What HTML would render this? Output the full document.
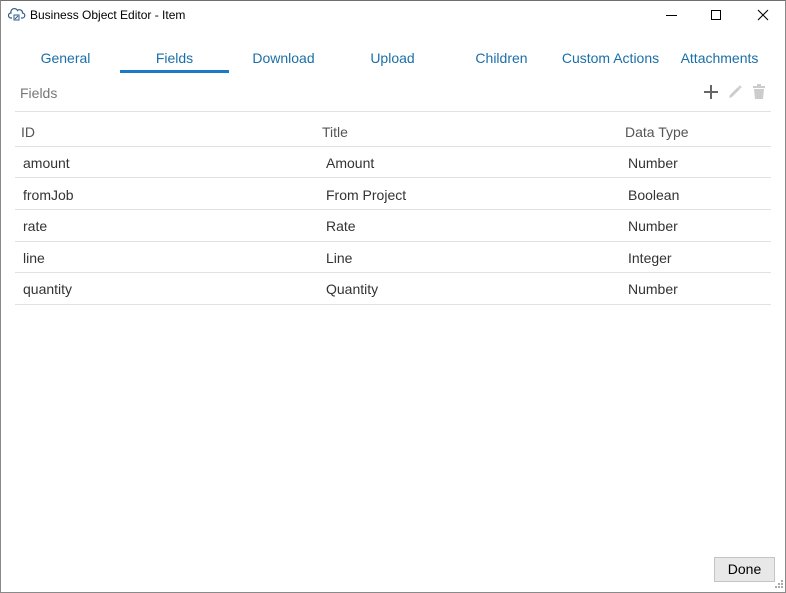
<!DOCTYPE html>
<html><head><style>
*{margin:0;padding:0;box-sizing:border-box}
body{width:786px;height:593px;overflow:hidden;background:#fff;font-family:"Liberation Sans",sans-serif;position:relative}
.win{position:absolute;left:0;top:0;width:786px;height:593px;border:1px solid #8a8a8a;border-top-color:#6f6f6f}
.t{position:absolute;white-space:nowrap}
.tab{position:absolute;top:50px;width:109px;text-align:center;font-size:14px;color:#1b6fa8}
.line{position:absolute;left:15px;width:756px;height:1px;background:#e2e2e2}
.c{position:absolute;font-size:14px;color:#333}
.h{position:absolute;font-size:14px;color:#555}
</style></head><body>
<div class="win"></div>
<svg style="position:absolute;left:8px;top:7px" width="18" height="16" viewBox="0 0 18 16"><path d="M4 11 H3 A2.5 2.5 0 0 1 3 6 A3.5 3.5 0 0 1 9.5 3.5 A3 3 0 0 1 14.5 6 A2.5 2.5 0 0 1 14 11 H13" fill="none" stroke="#2f5f8a" stroke-width="1.2"/><rect x="6" y="8" width="5" height="5" fill="none" stroke="#2f5f8a" stroke-width="1"/><path d="M7 12 L10 9" stroke="#2f5f8a"/></svg>
<div class="t" style="left:30px;top:8px;font-size:12px;color:#000">Business Object Editor - Item</div>
<div style="position:absolute;left:666px;top:15px;width:11px;height:1px;background:#000"></div>
<div style="position:absolute;left:711px;top:10px;width:10px;height:10px;border:1px solid #000"></div>
<svg style="position:absolute;left:757px;top:9px" width="12" height="12"><path d="M1 1L11 11M11 1L1 11" stroke="#000" stroke-width="1.1"/></svg>

<div class="tab" style="left:11px">General</div>
<div class="tab" style="left:120px">Fields</div>
<div class="tab" style="left:229px">Download</div>
<div class="tab" style="left:338px">Upload</div>
<div class="tab" style="left:447px">Children</div>
<div class="tab" style="left:556px">Custom Actions</div>
<div class="tab" style="left:665px">Attachments</div>
<div style="position:absolute;left:120px;top:70px;width:109px;height:3px;background:#1a7ac7"></div>

<div class="t" style="left:20px;top:85px;font-size:14px;color:#777">Fields</div>
<svg style="position:absolute;left:703px;top:84px" width="16" height="16"><path d="M8 1V15M1 8H15" stroke="#666" stroke-width="2"/></svg>
<svg style="position:absolute;left:727px;top:84px" width="16" height="16"><path d="M2 14 L3 11 L11 3 L13 5 L5 13 Z" fill="#ccc"/><path d="M12 2 L14 4" stroke="#ccc" stroke-width="2"/></svg>
<svg style="position:absolute;left:752px;top:84px" width="14" height="16"><rect x="1" y="2" width="12" height="2" fill="#ccc"/><rect x="5" y="0" width="4" height="2" fill="#ccc"/><path d="M2 5H12L11 15H3Z" fill="#ccc"/></svg>

<div class="line" style="top:111px"></div>
<div class="h" style="left:21px;top:124px">ID</div>
<div class="h" style="left:322px;top:124px">Title</div>
<div class="h" style="left:625px;top:124px">Data Type</div>
<div class="line" style="top:146px"></div>

<div class="c" style="left:23px;top:155px">amount</div><div class="c" style="left:326px;top:155px">Amount</div><div class="c" style="left:628px;top:155px">Number</div>
<div class="line" style="top:177px"></div>
<div class="c" style="left:23px;top:187px">fromJob</div><div class="c" style="left:326px;top:187px">From Project</div><div class="c" style="left:628px;top:187px">Boolean</div>
<div class="line" style="top:209px"></div>
<div class="c" style="left:23px;top:218px">rate</div><div class="c" style="left:326px;top:218px">Rate</div><div class="c" style="left:628px;top:218px">Number</div>
<div class="line" style="top:241px"></div>
<div class="c" style="left:23px;top:250px">line</div><div class="c" style="left:326px;top:250px">Line</div><div class="c" style="left:628px;top:250px">Integer</div>
<div class="line" style="top:272px"></div>
<div class="c" style="left:23px;top:281px">quantity</div><div class="c" style="left:326px;top:281px">Quantity</div><div class="c" style="left:628px;top:281px">Number</div>
<div class="line" style="top:304px"></div>

<div style="position:absolute;left:714px;top:557px;width:61px;height:25px;background:#e8e8e8;border:1px solid #c4c4c4;font-size:14px;color:#000;text-align:center;line-height:23px">Done</div>
<svg style="position:absolute;left:772px;top:579px" width="12" height="12"><g fill="#aaa"><rect x="9" y="1" width="2" height="2"/><rect x="6" y="4" width="2" height="2"/><rect x="9" y="4" width="2" height="2"/><rect x="3" y="7" width="2" height="2"/><rect x="6" y="7" width="2" height="2"/><rect x="9" y="7" width="2" height="2"/></g></svg>
</body></html>
